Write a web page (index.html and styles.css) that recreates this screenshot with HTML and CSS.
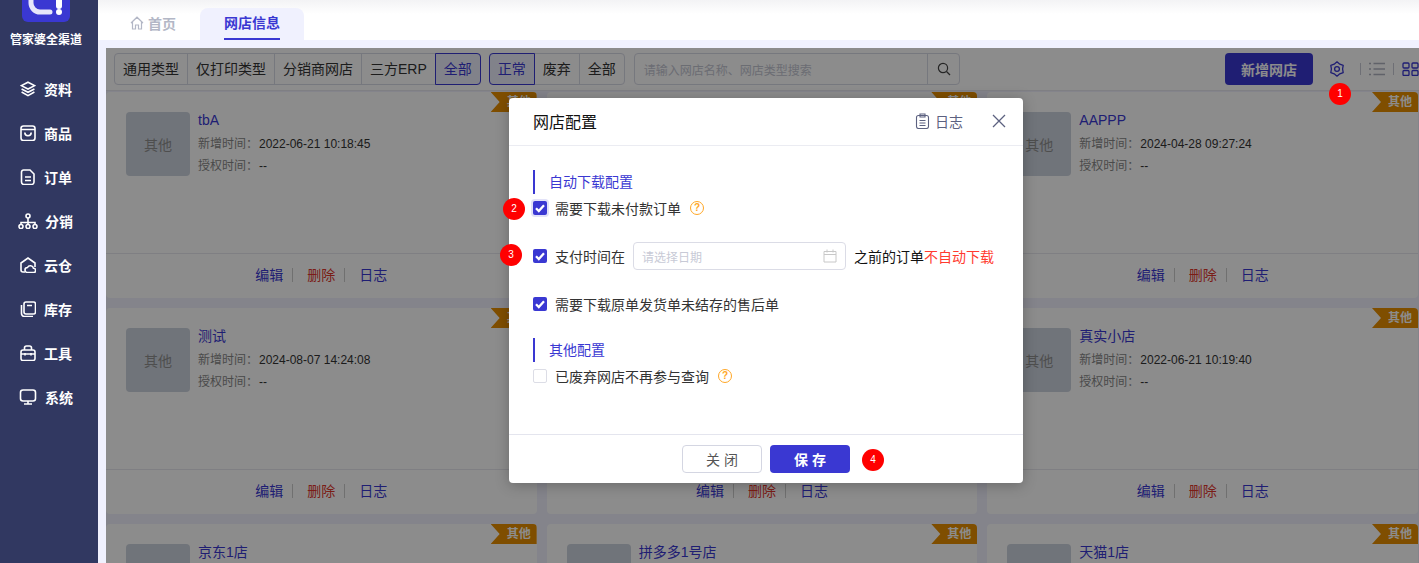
FILE: index.html
```html
<!DOCTYPE html>
<html lang="zh-CN">
	<head>
		<meta charset="UTF-8" />
		<meta name="viewport" content="width=device-width, initial-scale=1.0" />
		<title>网店信息</title>
		<link rel="stylesheet" href="styles.css">
	</head>

	<body>
		<aside class="sidebar">
			<svg class="logo" width="48" height="22" viewBox="0 0 48 22">
				<path d="M0 0H48V16a6 6 0 0 1-6 6H6a6 6 0 0 1-6-6Z" fill="#3a38d2"/>
				<path d="M9 0V3a9 9 0 0 0 9 9H28" fill="none" stroke="#e6e6fa" stroke-width="5" stroke-linecap="round"/>
				<path d="M37 0V6" stroke="#fff" stroke-width="6" stroke-linecap="round"/>
				<circle cx="37" cy="12" r="3" fill="#fff"/>
			</svg>
			<div class="brand">管家婆全渠道</div>
			<nav class="menu">
				<a class="menu-item">
					<svg viewBox="0 0 16 16"><path d="M8 1.200 14.600 4.600 8 8 1.400 4.600ZM1.600 8 8 11.300 14.400 8M1.600 11 8 14.600 14.400 11"/></svg>
					<span>资料</span>
				</a>
				<a class="menu-item">
					<svg viewBox="0 0 16 16"><rect x="1" y="1" width="14" height="14.500" rx="2.500"/><path d="M1 4.500H15M4.800 7.500a3.200 3.200 0 0 0 6.400 0"/></svg>
					<span>商品</span>
				</a>
				<a class="menu-item">
					<svg viewBox="0 0 16 16"><path d="M3.500 1H10L14 5V13a2.500 2.500 0 0 1-2.500 2.500h-8A2.500 2.500 0 0 1 1.500 13V3A2 2 0 0 1 3.500 1ZM5 8H11M5 11.500H11"/></svg>
					<span>订单</span>
				</a>
				<a class="menu-item">
					<svg class="wide" viewBox="0 0 20 16"><circle cx="10" cy="3" r="2"/><circle cx="3" cy="13.500" r="2"/><circle cx="10" cy="13.500" r="2"/><circle cx="17" cy="13.500" r="2"/><path d="M10 5V11.500M3 11.500V9.500H17V11.500"/></svg>
					<span>分销</span>
				</a>
				<a class="menu-item">
					<svg viewBox="0 0 16 16"><path d="M5 15H3a2 2 0 0 1-2-2V6L8 1l7 5v4"/><path d="M7.500 15.500a2.500 2.500 0 0 1 0-5 3.200 3.200 0 0 1 6 .8 2.100 2.100 0 0 1 0 4.200Z"/></svg>
					<span>云仓</span>
				</a>
				<a class="menu-item">
					<svg viewBox="0 0 16 16"><rect x="4" y="1" width="11.500" height="12" rx="2"/><path d="M1.500 4V12.500a3 3 0 0 0 3 3H13M7 4.500H12"/></svg>
					<span>库存</span>
				</a>
				<a class="menu-item">
					<svg viewBox="0 0 16 16"><rect x="1" y="5" width="14" height="10.500" rx="2"/><path d="M4.500 5V3a2 2 0 0 1 2-2h3a2 2 0 0 1 2 2V5M1 9H15M5 8V10.500M11 8V10.500"/></svg>
					<span>工具</span>
				</a>
				<a class="menu-item">
					<svg class="wide" viewBox="0 0 18 16"><rect x="1.500" y="1" width="15" height="11" rx="2.500"/><path d="M9 12V15M5 15H13"/></svg>
					<span>系统</span>
				</a>
			</nav>
		</aside>

		<div class="main">
			<div class="tabs-wrap">
				<div class="tabs">
					<a class="tab">
						<svg width="14" height="14" viewBox="0 0 14 14"><path d="M1 7 7 1.200 13 7M2.500 5.800V13H5.500V9H8.500V13H11.500V5.800"/></svg>
						首页
					</a>
					<a class="tab tab-active"><span>网店信息</span></a>
				</div>
			</div>

			<div class="content">
				<div class="toolbar">
					<div class="btn-group">
						<button>通用类型</button>
						<button>仅打印类型</button>
						<button>分销商网店</button>
						<button>三方ERP</button>
						<button class="on">全部</button>
					</div>
					<div class="btn-group">
						<button class="on">正常</button>
						<button>废弃</button>
						<button>全部</button>
					</div>
					<div class="search">
						<span class="search-text">请输入网店名称、网店类型搜索</span>
						<span class="search-btn">
							<svg width="14" height="14" viewBox="0 0 14 14"><circle cx="6" cy="6" r="4.600"/><path d="M9.500 9.500 13 13"/></svg>
						</span>
					</div>
					<button class="add-btn">新增网店</button>
					<svg class="tool-icon gear" width="16" height="16" viewBox="0 0 16 16"><path d="M8 .8 10.800 3.150 14.200 4.400 13.600 8 14.200 11.600 10.800 12.850 8 15.200 5.200 12.850 1.800 11.600 2.400 8 1.800 4.400 5.200 3.150Z" stroke-linejoin="round"/><circle cx="8" cy="8" r="2.400"/></svg>
					<i class="tool-sep sep-first"></i>
					<svg class="tool-icon list" width="16" height="14" viewBox="0 0 16 14"><path d="M4.500 1.500H16M4.500 7H16M4.500 12.500H16M0 1.500H2M0 7H2M0 12.500H2"/></svg>
					<i class="tool-sep"></i>
					<svg class="tool-icon grid" width="17" height="14" viewBox="0 0 17 14"><rect x="1" y="1" width="6" height="5" rx="1"/><rect x="10" y="1" width="6" height="5" rx="1"/><rect x="1" y="8.500" width="6" height="5" rx="1"/><rect x="10" y="8.500" width="6" height="5" rx="1"/></svg>
				</div>

				<div class="cards">
					<div class="card">
						<div class="ribbon">其他</div>
						<div class="card-body">
							<div class="thumb">其他</div>
							<div class="info">
								<div class="name">tbA</div>
								<div class="meta"><label>新增时间：</label>2022-06-21 10:18:45</div>
								<div class="meta"><label>授权时间：</label>--</div>
							</div>
						</div>
						<div class="card-foot"><a>编辑</a><a class="del">删除</a><a>日志</a></div>
					</div>
					<div class="card">
						<div class="ribbon">其他</div>
						<div class="card-body"></div>
						<div class="card-foot"><a>编辑</a><a class="del">删除</a><a>日志</a></div>
					</div>
					<div class="card">
						<div class="ribbon">其他</div>
						<div class="card-body">
							<div class="thumb">其他</div>
							<div class="info">
								<div class="name">AAPPP</div>
								<div class="meta"><label>新增时间：</label>2024-04-28 09:27:24</div>
								<div class="meta"><label>授权时间：</label>--</div>
							</div>
						</div>
						<div class="card-foot"><a>编辑</a><a class="del">删除</a><a>日志</a></div>
					</div>
					<div class="card">
						<div class="ribbon">其他</div>
						<div class="card-body">
							<div class="thumb">其他</div>
							<div class="info">
								<div class="name">测试</div>
								<div class="meta"><label>新增时间：</label>2024-08-07 14:24:08</div>
								<div class="meta"><label>授权时间：</label>--</div>
							</div>
						</div>
						<div class="card-foot"><a>编辑</a><a class="del">删除</a><a>日志</a></div>
					</div>
					<div class="card">
						<div class="ribbon">其他</div>
						<div class="card-body"></div>
						<div class="card-foot"><a>编辑</a><a class="del">删除</a><a>日志</a></div>
					</div>
					<div class="card">
						<div class="ribbon">其他</div>
						<div class="card-body">
							<div class="thumb">其他</div>
							<div class="info">
								<div class="name">真实小店</div>
								<div class="meta"><label>新增时间：</label>2022-06-21 10:19:40</div>
								<div class="meta"><label>授权时间：</label>--</div>
							</div>
						</div>
						<div class="card-foot"><a>编辑</a><a class="del">删除</a><a>日志</a></div>
					</div>
					<div class="card">
						<div class="ribbon">其他</div>
						<div class="card-body">
							<div class="thumb"></div>
							<div class="info"><div class="name">京东1店</div></div>
						</div>
					</div>
					<div class="card">
						<div class="ribbon">其他</div>
						<div class="card-body">
							<div class="thumb"></div>
							<div class="info"><div class="name">拼多多1号店</div></div>
						</div>
					</div>
					<div class="card">
						<div class="ribbon">其他</div>
						<div class="card-body">
							<div class="thumb"></div>
							<div class="info"><div class="name">天猫1店</div></div>
						</div>
					</div>
				</div>

				<div class="mask"></div>
				<span class="step step-1">1</span>

				<div class="modal">
					<div class="modal-head">
						<h3>网店配置</h3>
						<a class="modal-log">
							<svg width="15" height="16" viewBox="0 0 15 16"><rect x="1.500" y="2.500" width="12" height="13" rx="2"/><path d="M5 1H10V4H5ZM4.500 7.500H10.500M4.500 10H10.500M4.500 12.500H10.500"/></svg>
							日志
						</a>
						<svg class="modal-close" width="14" height="14" viewBox="0 0 14 14"><path d="M1 1 13 13M13 1 1 13"/></svg>
					</div>
					<div class="modal-body">
						<div class="section">自动下载配置</div>
						<div class="row">
							<span class="check checked focused"><svg viewBox="0 0 14 14"><path d="M3 7.200 5.800 10 11 4.300"/></svg></span>
							<span class="row-text">需要下载未付款订单</span>
							<span class="help">?</span>
						</div>
						<div class="row">
							<span class="check checked"><svg viewBox="0 0 14 14"><path d="M3 7.200 5.800 10 11 4.300"/></svg></span>
							<span class="row-text">支付时间在</span>
							<span class="date-input">
								<span>请选择日期</span>
								<svg width="14" height="14" viewBox="0 0 14 14"><path d="M1 2.500H13V13H1ZM1 5.500H13M4 .5V3.500M10 .5V3.500"/></svg>
							</span>
							<span class="row-text dark">之前的订单<em>不自动下载</em></span>
						</div>
						<div class="row row-last">
							<span class="check checked"><svg viewBox="0 0 14 14"><path d="M3 7.200 5.800 10 11 4.300"/></svg></span>
							<span class="row-text">需要下载原单发货单未结存的售后单</span>
						</div>
						<div class="section">其他配置</div>
						<div class="row">
							<span class="check"></span>
							<span class="row-text">已废弃网店不再参与查询</span>
							<span class="help">?</span>
						</div>
					</div>
					<div class="modal-foot">
						<button class="btn-plain">关 闭</button>
						<button class="btn-save">保 存</button>
					</div>
					<span class="step step-2">2</span>
					<span class="step step-3">3</span>
					<span class="step step-4">4</span>
				</div>
			</div>
		</div>
	</body>
</html>
```

FILE: styles.css
```css
html, body {
	margin: 0;
	padding: 0;
	height: 100%;
	overflow: hidden;
	font-family: "Liberation Sans", "Noto Sans CJK SC", sans-serif;
	font-size: 14px;
}

body {
	display: flex;
	background-color: #f0f1fe;
}

button {
	font: inherit;
	cursor: pointer;
}

/* sidebar */
.sidebar {
	flex: 0 0 98px;
	background-color: #313861;
	color: #fff;
	display: flex;
	flex-direction: column;
	align-items: center;
}

.logo {
	display: block;
	margin-right: 6px;
}

.brand {
	margin-top: 11px;
	margin-right: 6px;
	font-size: 12px;
	line-height: 14px;
	font-weight: bold;
}

.menu {
	margin-top: 20px;
	width: 100%;
}

.menu-item {
	display: flex;
	align-items: center;
	gap: 8px;
	height: 44px;
	padding-left: 20px;
	font-weight: bold;
}

.menu-item svg {
	width: 16px;
	height: 16px;
	flex: none;
	fill: none;
	stroke: #fff;
	stroke-width: 1.600;
}

.menu-item svg.wide {
	width: 20px;
	margin-left: -2px;
	margin-right: -1px;
}

/* tabs */
.main {
	flex: 1;
	min-width: 0;
	display: flex;
	flex-direction: column;
}

.tabs-wrap {
	height: 40px;
	padding-top: 8px;
	box-sizing: border-box;
	background: linear-gradient(#f3f3f5, #fff 14px);
}

.tabs {
	display: flex;
	height: 32px;
	padding-left: 32px;
}

.tab {
	display: flex;
	align-items: center;
	gap: 4px;
	width: 70px;
	padding-bottom: 2px;
	box-sizing: border-box;
	color: #b3b7c6;
	font-weight: bold;
}

.tab svg {
	fill: none;
	stroke: #b3b7c6;
	stroke-width: 1.200;
}

.tab-active {
	width: 104px;
	padding-bottom: 0;
	justify-content: center;
	background-color: #f0f1fe;
	border-radius: 8px 8px 0 0;
	color: #3a38d2;
}

.tab-active span {
	margin-top: 1px;
	line-height: 29px;
	border-bottom: 2px solid #3a38d2;
}

/* content */
.content {
	position: relative;
	flex: 1;
	min-height: 0;
	overflow: hidden;
	margin-top: 8px;
	margin-left: 8px;
}

.toolbar {
	display: flex;
	align-items: center;
	gap: 8px;
	height: 43px;
	box-sizing: border-box;
	padding: 5px 0 5px 8px;
	background-color: #fff;
	border-bottom: 1px solid #e8e8ee;
}

.btn-group {
	display: flex;
	height: 32px;
	box-sizing: border-box;
	border: 1px solid #d8dae6;
	border-radius: 4px;
}

.btn-group button {
	padding: 0 8px 2px;
	border: 0;
	border-left: 1px solid #d8dae6;
	background: none;
	color: #333;
	white-space: nowrap;
}

.btn-group button:first-child {
	border-left: 0;
}

.btn-group button.on {
	margin: -1px 0;
	border: 1px solid #3a38d2;
	background-color: #ecedfb;
	color: #3a38d2;
}

.btn-group button.on + button {
	border-left: 0;
}

.btn-group button.on:first-child {
	margin-left: -1px;
	border-radius: 4px 0 0 4px;
}

.btn-group button.on:last-child {
	margin-right: -1px;
	border-radius: 0 4px 4px 0;
}

.search {
	display: flex;
	align-items: center;
	width: 327px;
	height: 32px;
	box-sizing: border-box;
	margin-left: 1px;
	border: 1px solid #d8dae6;
	border-radius: 4px;
}

.search-text {
	flex: 1;
	padding-left: 9px;
	font-size: 12px;
	color: #c4c6d2;
}

.search-btn {
	display: flex;
	align-items: center;
	justify-content: center;
	width: 31px;
	height: 100%;
	border-left: 1px solid #d8dae6;
}

.search-btn svg {
	fill: none;
	stroke: #444;
	stroke-width: 1.200;
}

.add-btn {
	width: 88px;
	height: 32px;
	margin-left: 257px;
	padding-bottom: 2px;
	border: 0;
	border-radius: 4px;
	background-color: #3a38d2;
	color: #fff;
	font-weight: bold;
}

.tool-icon {
	flex: none;
	fill: none;
	stroke: #3a38d2;
	stroke-width: 1.300;
}

.gear {
	margin-left: 8px;
}

.list {
	stroke: #b0b2c0;
}

.tool-sep {
	flex: none;
	width: 1px;
	height: 12px;
	background-color: #c8cad6;
}

.sep-first {
	margin-left: 7px;
}

/* cards */
.cards {
	display: grid;
	grid-template-columns: repeat(3, 1fr);
	grid-auto-rows: 206px;
	gap: 10px;
	padding: 1px 1px 0 0;
}

.card {
	position: relative;
	display: flex;
	flex-direction: column;
	background-color: #fff;
	border-radius: 4px;
}

.ribbon {
	position: absolute;
	top: 0;
	right: 0;
	width: 46px;
	height: 20px;
	padding-left: 10px;
	box-sizing: border-box;
	font-size: 12px;
	font-weight: bold;
	line-height: 20px;
	text-align: center;
	color: #fff;
	background-color: #e88f00;
	border-top-right-radius: 4px;
	clip-path: polygon(0 0, 100% 0, 100% 100%, 0 100%, 9px 50%);
}

.card-body {
	flex: 1;
	display: flex;
	gap: 8px;
	padding: 20px;
}

.thumb {
	display: flex;
	align-items: center;
	justify-content: center;
	flex: none;
	width: 64px;
	height: 64px;
	border-radius: 4px;
	background-color: #ccd3de;
	color: #8f8f8f;
}

.name {
	margin-top: -1px;
	line-height: 18px;
	color: #3a38d2;
}

.meta {
	margin-top: 7px;
	font-size: 12px;
	line-height: 16px;
	color: #333;
}

.meta + .meta {
	margin-top: 6px;
}

.meta label {
	display: inline-block;
	width: 61px;
	color: #888;
}

.card-foot {
	display: flex;
	justify-content: center;
	align-items: center;
	height: 45px;
	box-sizing: border-box;
	padding-bottom: 2px;
	border-top: 1px solid #e8e8ee;
}

.card-foot a {
	padding: 0 9px 0 14px;
	border-left: 1px solid #ccc;
	line-height: 14px;
	color: #3a38d2;
}

.card-foot a:first-child {
	padding-left: 0;
	border-left: 0;
}

.card-foot a:last-child {
	padding-right: 0;
}

.card-foot a.del {
	color: #e0352b;
}

/* modal */
.mask {
	position: absolute;
	inset: 0;
	background-color: rgba(0, 0, 0, .45);
}

.modal {
	position: absolute;
	left: 403px;
	top: 50px;
	width: 514px;
	height: 385px;
	display: flex;
	flex-direction: column;
	background-color: #fff;
	border-radius: 4px;
	box-shadow: 0 2px 14px rgba(0, 0, 0, .25);
}

.modal-head {
	display: flex;
	align-items: center;
	flex: none;
	height: 48px;
	box-sizing: border-box;
	padding: 0 17px 2px 24px;
	border-bottom: 1px solid #ebecf2;
}

.modal-head h3 {
	flex: 1;
	margin: 0;
	font-size: 16px;
	font-weight: 400;
	color: #111;
}

.modal-log {
	display: flex;
	align-items: center;
	gap: 5px;
	margin-right: 29px;
	color: #5c6180;
}

.modal-log svg {
	fill: none;
	stroke: #5c6180;
	stroke-width: 1.100;
}

.modal-close {
	fill: none;
	stroke: #5c6180;
	stroke-width: 1.300;
}

.modal-body {
	flex: 1;
	padding: 24px 24px 0;
}

.section {
	height: 24px;
	margin-bottom: 2px;
	padding-left: 14px;
	border-left: 2px solid #3a38d2;
	line-height: 24px;
	color: #3a38d2;
}

.row {
	display: flex;
	align-items: center;
	height: 24px;
	margin-bottom: 24px;
}

.row-last {
	margin-bottom: 22px;
}

.check {
	flex: none;
	width: 14px;
	height: 14px;
	margin-right: 8px;
	box-sizing: border-box;
	border: 1px solid #dcdde6;
	border-radius: 2px;
	background-color: #fff;
}

.check.checked {
	border: 0;
	background-color: #3a38d2;
}

.check.focused {
	box-shadow: 0 0 0 2px #e2e2f8;
}

.check svg {
	display: block;
	fill: none;
	stroke: #fff;
	stroke-width: 2.300;
}

.row-text {
	color: #333;
}

.row-text.dark {
	color: #111;
}

.row-text em {
	font-style: normal;
	color: #ff3b30;
}

.help {
	flex: none;
	width: 12px;
	height: 12px;
	margin-left: 9px;
	border: 1.500px solid #ffa726;
	border-radius: 50%;
	font-size: 10px;
	font-weight: bold;
	line-height: 12px;
	text-align: center;
	color: #ffa726;
}

.date-input {
	display: flex;
	align-items: center;
	justify-content: space-between;
	width: 213px;
	height: 28px;
	box-sizing: border-box;
	margin: 0 8px;
	padding: 0 8px;
	border: 1px solid #dbdce6;
	border-radius: 4px;
	font-size: 12px;
	color: #c8cad6;
}

.date-input svg {
	fill: none;
	stroke: #c8c8c8;
	stroke-width: 1;
}

.modal-foot {
	display: flex;
	justify-content: center;
	gap: 8px;
	flex: none;
	height: 49px;
	box-sizing: border-box;
	padding-top: 10px;
	border-top: 1px solid #e4e5ee;
}

.modal-foot button {
	width: 80px;
	height: 28px;
	border-radius: 4px;
}

.btn-plain {
	border: 1px solid #d4d6e2;
	background-color: #fff;
	color: #555;
}

.btn-save {
	border: 0;
	background-color: #3a38d2;
	color: #fff;
	font-weight: bold;
}

/* numbered markers */
.step {
	position: absolute;
	width: 22px;
	height: 22px;
	border-radius: 50%;
	background-color: #f00;
	color: #fff;
	font-size: 10px;
	line-height: 22px;
	text-align: center;
}

.step-1 {
	left: 1223px;
	top: 35px;
}

.step-2 {
	left: -6px;
	top: 100px;
}

.step-3 {
	left: -9px;
	top: 146px;
}

.step-4 {
	left: 353px;
	top: 351px;
}
```
